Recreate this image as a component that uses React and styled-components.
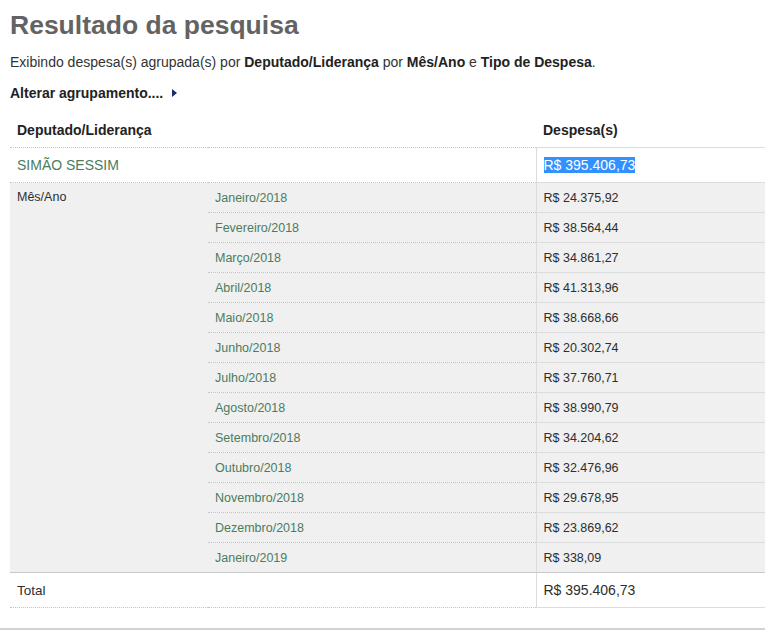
import React from "react";
import styled, { createGlobalStyle } from "styled-components";

const Global = createGlobalStyle`
  html, body { margin: 0; padding: 0; background: #fff; }
  body { font-family: "Liberation Sans", Arial, sans-serif; color: #333; }
`;

const Page = styled.div`
  padding: 0 0 0 10px;
`;

const Title = styled.h1`
  margin: 10px 0 0;
  font-size: 26.5px;
  line-height: 30px;
  font-weight: bold;
  color: #636363;
`;

const Summary = styled.p`
  margin: 13px 0 0;
  font-size: 14px;
  line-height: 18px;
  color: #333;
  b { color: #222; }
`;

const Regroup = styled.div`
  margin-top: 13px;
  display: flex;
  align-items: center;
  gap: 9px;
  font-size: 14px;
  line-height: 18px;
  font-weight: bold;
  color: #222;
`;

const Table = styled.table`
  margin-top: 11px;
  width: 755px;
  border-collapse: collapse;
  table-layout: fixed;
`;

const Row = styled.tr`
  background: ${(p) => (p.$shaded ? "#f0f0f0" : "#fff")};
`;

const Head = styled.th`
  height: ${(p) => p.$h || 34}px;
  padding: 0 7px;
  text-align: left;
  font-size: 14px;
  font-weight: bold;
  color: #222;
  border-bottom: 1px ${(p) => (p.$solid ? "solid #dcdcdc" : "dotted #c4c4c4")};
`;

const Cell = styled.td`
  height: ${(p) => p.$h || 29}px;
  padding: 0 7px;
  font-size: ${(p) => p.$size || 12.5}px;
  color: ${(p) => (p.$green ? "#4b7c5e" : "#2e2e2e")};
  vertical-align: ${(p) => (p.$top ? "top" : "middle")};
  line-height: ${(p) => (p.$top ? "28px" : "normal")};
  border-bottom: 1px
    ${(p) =>
      p.$edge ? "solid #c8c8c8" : p.$solid ? "solid #dcdcdc" : "dotted #c4c4c4"};
  border-left: ${(p) => (p.$divider ? "1px solid #dcdcdc" : "none")};
  white-space: nowrap;
`;

const Selected = styled.span`
  background: #3390ff;
  color: #fff;
`;

const FooterRule = styled.div`
  margin-top: 20px;
  border-top: 2px solid #d2d2d2;
`;

const months = [
  ["Janeiro/2018", "R$ 24.375,92"],
  ["Fevereiro/2018", "R$ 38.564,44"],
  ["Março/2018", "R$ 34.861,27"],
  ["Abril/2018", "R$ 41.313,96"],
  ["Maio/2018", "R$ 38.668,66"],
  ["Junho/2018", "R$ 20.302,74"],
  ["Julho/2018", "R$ 37.760,71"],
  ["Agosto/2018", "R$ 38.990,79"],
  ["Setembro/2018", "R$ 34.204,62"],
  ["Outubro/2018", "R$ 32.476,96"],
  ["Novembro/2018", "R$ 29.678,95"],
  ["Dezembro/2018", "R$ 23.869,62"],
  ["Janeiro/2019", "R$ 338,09"],
];

const Arrow = () => (
  <svg width="5" height="8" viewBox="0 0 5 8" aria-hidden="true">
    <path d="M0 0 L5 4 L0 8 Z" fill="#1b2a6b" />
  </svg>
);

export default function App() {
  return (
    <>
      <Global />
      <Page>
        <Title>Resultado da pesquisa</Title>
        <Summary>
          Exibindo despesa(s) agrupada(s) por <b>Deputado/Liderança</b> por{" "}
          <b>Mês/Ano</b> e <b>Tipo de Despesa</b>.
        </Summary>
        <Regroup>
          <span>Alterar agrupamento....</span>
          <Arrow />
        </Regroup>
        <Table>
          <colgroup>
            <col style={{ width: 198 }} />
            <col style={{ width: 328 }} />
            <col style={{ width: 229 }} />
          </colgroup>
          <tbody>
            <Row>
              <Head colSpan={2}>Deputado/Liderança</Head>
              <Head $solid>Despesa(s)</Head>
            </Row>
            <Row>
              <Cell colSpan={2} $h={34} $size={14} $green>
                SIMÃO SESSIM
              </Cell>
              <Cell $h={34} $size={14} $solid $divider>
                <Selected>R$ 395.406,73</Selected>
              </Cell>
            </Row>
            {months.map(([m, v], i) => {
              const last = i === months.length - 1;
              return (
                <Row $shaded key={m}>
                  {i === 0 && (
                    <Cell rowSpan={months.length} $top $edge>
                      Mês/Ano
                    </Cell>
                  )}
                  <Cell $green $edge={last}>
                    {m}
                  </Cell>
                  <Cell $solid $edge={last} $divider>
                    {v}
                  </Cell>
                </Row>
              );
            })}
            <Row>
              <Cell colSpan={2} $h={34} $size={13.5}>
                Total
              </Cell>
              <Cell $h={34} $size={14} $solid $divider>
                R$ 395.406,73
              </Cell>
            </Row>
          </tbody>
        </Table>
      </Page>
      <FooterRule />
    </>
  );
}
